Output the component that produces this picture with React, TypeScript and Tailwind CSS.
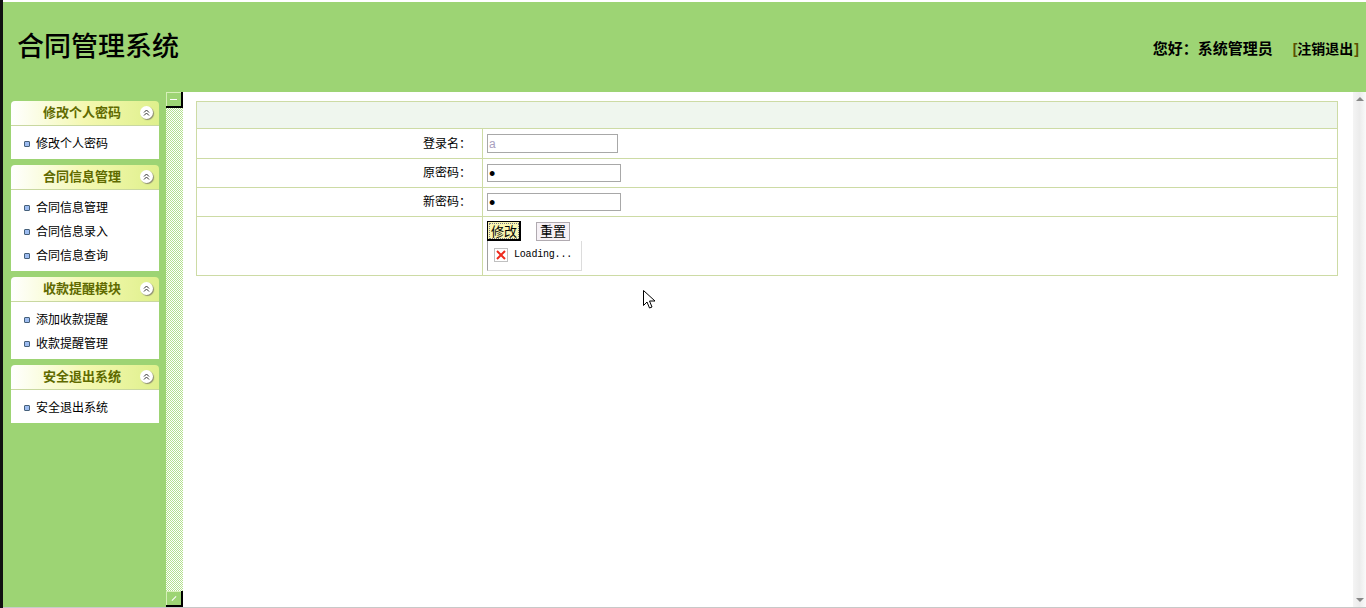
const cjk = "font-['Liberation_Sans','Noto_Sans_CJK_SC',sans-serif]";

const MENUS = [
  { title: '修改个人密码', items: ['修改个人密码'] },
  { title: '合同信息管理', items: ['合同信息管理', '合同信息录入', '合同信息查询'] },
  { title: '收款提醒模块', items: ['添加收款提醒', '收款提醒管理'] },
  { title: '安全退出系统', items: ['安全退出系统'] },
];

function CollapseIcon() {
  return (
    <span className="flex h-[13px] w-[13px] items-center justify-center rounded-full bg-white shadow-[1px_1px_1px_#8a8a70]">
      <svg width="7" height="7" viewBox="0 0 7 7" fill="none" stroke="#333" strokeWidth="1">
        <path d="M1 3.5 3.500 1 6 3.500M1 6.500 3.500 4 6 6.500" />
      </svg>
    </span>
  );
}

function MenuPanel({ title, items }: { title: string; items: string[] }) {
  return (
    <div className="w-[148px]">
      <div className="flex h-[25px] items-center rounded-t-[4px] border-b border-[#c9d8a0] bg-gradient-to-r from-white via-[#f4f8b0] to-[#dff08c] pr-[6px] pb-px">
        <span className="ml-[32px] w-[97px] text-[13px] font-bold text-[#5f6a00]">{title}</span>
        <CollapseIcon />
      </div>
      <div className="bg-white pt-[6px] pb-[3px]">
        {items.map((item) => (
          <div key={item} className="flex h-6 items-center pl-[13px] text-xs text-black">
            <span className="mr-[6px] h-[6px] w-[6px] rounded-[1px] border border-[#46607a] bg-[#9dbcf0]" />
            {item}
          </div>
        ))}
      </div>
    </div>
  );
}

function ToggleButton({ down }: { down?: boolean }) {
  return (
    <div className="relative flex h-4 w-[17px] items-center justify-center border-r-2 border-b-2 border-black bg-[#9dd474] shadow-[inset_1px_1px_0_#d6f0b8]">
      <span className={down ? 'h-px w-[6px] -rotate-45 bg-white' : 'h-px w-[7px] bg-white'} />
    </div>
  );
}

function FormRow({ label, height, children }: { label?: string; height: string; children: React.ReactNode }) {
  return (
    <div className={`flex border-b border-[#cddba5] ${height}`}>
      <div className="flex w-[286px] items-center justify-end border-r border-[#cddba5] pr-[11px] text-xs text-black">
        {label}
      </div>
      <div className="flex-1 pl-1">{children}</div>
    </div>
  );
}

export default function App() {
  return (
    <div className={`relative flex h-[608px] w-[1366px] overflow-hidden bg-white ${cjk}`}>
      <div className="w-[3px] bg-[#111]" />
      <div className="flex flex-1 flex-col">
        <div className="h-[2px] bg-white" />
        <header className="flex h-[90px] items-start justify-between bg-[#9dd474] pr-[7px] pl-[14px] text-black">
          <h1 className="mt-[27px] text-[27px] leading-[36px] font-medium">合同管理系统</h1>
          <div className="mt-[37px] flex items-center leading-[18px] font-bold">
            <span className="mr-[20px] text-[15px]">您好：系统管理员</span>
            <span className="text-sm">
              <span className="font-bold text-[#5a5000]">[</span>注销退出<span className="ml-[1px] font-bold text-[#5a5000]">]</span>
            </span>
          </div>
        </header>
        <div className="flex flex-1">
          <aside className="flex w-[163px] flex-col gap-[6px] bg-[#9dd474] pt-[9px] pl-2">
            {MENUS.map((m) => (
              <MenuPanel key={m.title} title={m.title} items={m.items} />
            ))}
          </aside>
          <div className="relative flex w-[17px] flex-col justify-between">
            {/* dither texture behind the two toggle buttons */}
            <svg className="absolute inset-0 h-full w-full" shapeRendering="crispEdges">
              <defs>
                <pattern id="dither" width="2" height="2" patternUnits="userSpaceOnUse">
                  <rect width="2" height="2" fill="#ffffff" />
                  <rect width="1" height="1" fill="#b4e090" />
                  <rect x="1" y="1" width="1" height="1" fill="#b4e090" />
                </pattern>
              </defs>
              <rect width="100%" height="100%" fill="url(#dither)" />
            </svg>
            <ToggleButton />
            <ToggleButton down />
          </div>
          <main className="flex-1 pt-[9px] pr-[15px] pl-[13px]">
            <div className="border-t border-r border-l border-[#cddba5]">
              <div className="h-[27px] border-b border-[#cddba5] bg-[#eff6ee]" />
              <FormRow label="登录名：" height="h-[30px]">
                <input readOnly value="a" className="mt-[5px] h-[19px] w-[131px] border border-[#a8a8a8] bg-white px-[1px] text-xs text-[#a9a0c0] outline-none" />
              </FormRow>
              <FormRow label="原密码：" height="h-[29px]">
                <input readOnly type="password" value="a" className="mt-[5px] h-[18px] w-[134px] border border-[#a8a8a8] bg-white px-[1px] pt-[2px] text-lg leading-none text-black outline-none" />
              </FormRow>
              <FormRow label="新密码：" height="h-[29px]">
                <input readOnly type="password" value="a" className="mt-[5px] h-[18px] w-[134px] border border-[#a8a8a8] bg-white px-[1px] pt-[2px] text-lg leading-none text-black outline-none" />
              </FormRow>
              <FormRow height="h-[59px]">
                <div className="flex items-start gap-[15px] pt-[4px]">
                  <button type="button" className="h-5 w-[34px] border border-black bg-[#f8f4b0] text-[13px] leading-none text-black shadow-[inset_-1px_-1px_0_#000] outline-1 -outline-offset-3 outline-[#778] outline-dotted">修改</button>
                  <button type="button" className="mt-px h-[19px] w-[34px] border border-[#b0aab0] bg-[#f6f1f6] text-[13px] leading-none text-black">重置</button>
                </div>
                <div className="flex h-[30px] w-[95px] items-center gap-[6px] border-r border-b border-l border-[#dcdcdc] border-l-[#a0a0a0] pb-px pl-[6px]">
                  <span className="flex h-[14px] w-[14px] items-center justify-center border border-[#c0c0c0] bg-white">
                    <svg width="10" height="10" viewBox="0 0 10 10" stroke="#ee2a1c" strokeWidth="2">
                      <path d="M1 1 9 9M9 1 1 9" />
                    </svg>
                  </span>
                  <span className="font-['Liberation_Mono',monospace] text-[10px] leading-none tracking-[-0.2px] text-black">Loading...</span>
                </div>
              </FormRow>
            </div>
          </main>
          <div className="flex w-[13px] flex-col items-center justify-between bg-gradient-to-r from-[#f4f4f4] via-[#ececec] to-[#fafafa] py-[5px]">
            <span className="h-0 w-0 border-x-[4px] border-b-[4px] border-x-transparent border-b-[#888]" />
            <span className="h-0 w-0 border-x-[4px] border-t-[4px] border-x-transparent border-t-[#888]" />
          </div>
        </div>
        <div className="h-px bg-[#c8c8c8]" />
      </div>
      <svg className="absolute top-[290px] left-[643px]" width="13" height="20" viewBox="0 0 13 20">
        <path d="M.5.5v15l3.500-3.500 2.500 6 2.500-1-2.500-6h5.500z" fill="#fff" stroke="#000" />
      </svg>
    </div>
  );
}
